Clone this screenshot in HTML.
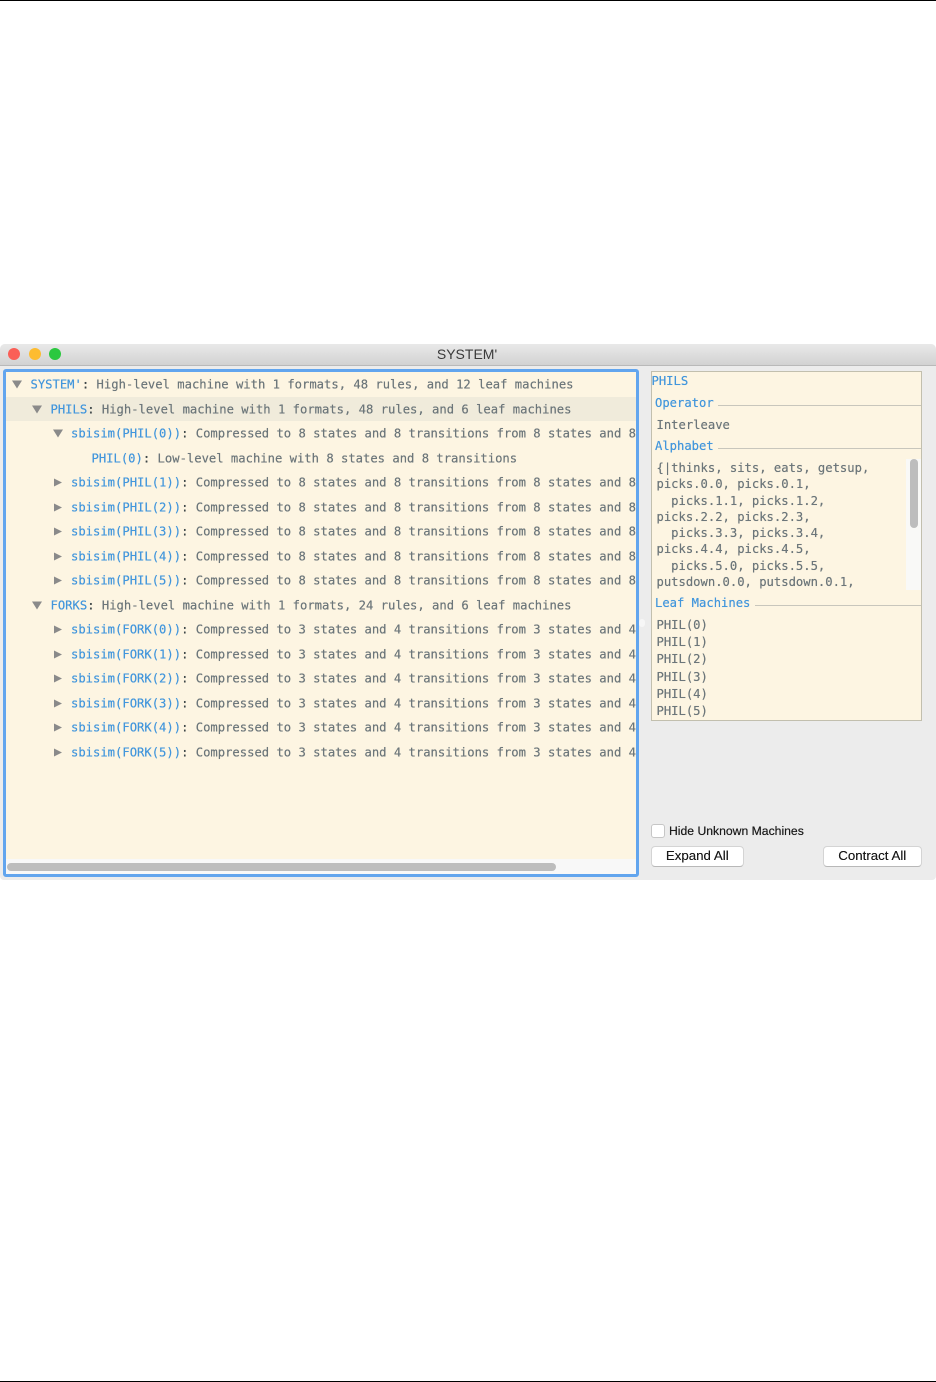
<!DOCTYPE html>
<html><head><meta charset="utf-8"><style>
html,body{margin:0;padding:0;background:#fff}
#p{position:relative;width:936px;height:1382px;overflow:hidden;background:#fff;font-family:"DejaVu Sans Mono","Liberation Mono",monospace;font-size:12.2px;color:#6c767a}
.a{position:absolute}
.r{position:absolute;line-height:20px;white-space:pre;height:20px;filter:blur(.3px);text-shadow:0 0 .4px currentColor;margin-left:-.5px}
b{font-weight:normal;color:#4296dc}
i{font-style:normal;color:#3d4648}
.t{position:absolute;width:0;height:0}
.d{border-left:5px solid transparent;border-right:5px solid transparent;border-top:8.5px solid #8a8a8a}
.g{border-top:4.5px solid transparent;border-bottom:4.5px solid transparent;border-left:8px solid #8a8a8a;margin-top:.5px;margin-left:-.5px}
.h{position:absolute;height:1px;background:#c8c6bc}
.s{font-family:"Liberation Sans",sans-serif;color:#1c1c1c;font-size:12.2px}
.btn{position:absolute;top:846px;height:21px;background:#fff;border:1px solid #d4d4d4;border-bottom:1.5px solid #b8b8b8;border-radius:4px;text-align:center;line-height:17px;font-family:"Liberation Sans",sans-serif;font-size:13.3px;color:#1a1a1a;box-sizing:border-box;text-shadow:0 0 .3px #1a1a1a}
</style></head><body><div id="p">
<div class="a" style="left:0;top:0;width:936px;height:1px;background:#000"></div>
<div class="a" style="left:0;top:1381px;width:936px;height:1px;background:#000"></div>

<div class="a" style="left:0;top:344px;width:936px;height:536px;background:#ececec;border-radius:5px 5px 4px 4px;overflow:hidden">
  <div class="a" style="left:0;top:0;width:936px;height:21px;background:linear-gradient(#e9e9e9,#d2d2d2);border-bottom:1px solid #b9b9b9"></div>
  <div class="a" style="left:8px;top:4px;width:12px;height:12px;border-radius:50%;background:#fa5f57"></div>
  <div class="a" style="left:29px;top:4px;width:12px;height:12px;border-radius:50%;background:#fdbc30"></div>
  <div class="a" style="left:49px;top:4px;width:12px;height:12px;border-radius:50%;background:#2bc83f"></div>
  <div class="a" style="left:0;top:0;width:934px;text-align:center;line-height:20px;font-family:'Liberation Sans',sans-serif;font-size:14px;color:#3a3a3a">SYSTEM'</div>
</div>

<!-- Left pane -->
<div class="a" style="left:3px;top:369px;width:636px;height:508px;box-sizing:border-box;border:3px solid #62a5ee;border-radius:3px;background:#fdf5e2"></div>
<div class="a" style="left:6px;top:396.5px;width:630px;height:24.5px;background:#f0ebdb"></div>
<div class="a" style="left:6px;top:859px;width:630px;height:15px;background:#f8f8f8"></div>
<div class="a" style="left:7px;top:863px;width:549px;height:8px;border-radius:4px;background:#bdbdbd"></div>
<div class="a" style="left:639px;top:619px;width:6px;height:8px;border-radius:3px;background:#f6f6f6"></div>

<div class="a" id="tree" style="left:0;top:0;width:636px;height:860px;overflow:hidden;transform:translateY(.5px)">
<div class="t d" style="left:12px;top:380px"></div>
<div class="r" style="left:31px;top:374px"><b>SYSTEM'</b><i>:</i> High-level machine with 1 formats, 48 rules, and 12 leaf machines</div>
<div class="t d" style="left:32px;top:405px"></div>
<div class="r" style="left:51px;top:398.5px"><b>PHILS</b><i>:</i> High-level machine with 1 formats, 48 rules, and 6 leaf machines</div>
<div class="t d" style="left:53px;top:429px"></div>
<div class="r" style="left:71.5px;top:423px"><b>sbisim(PHIL(0))</b><i>:</i> Compressed to 8 states and 8 transitions from 8 states and 8</div>
<div class="r" style="left:92px;top:447.5px"><b>PHIL(0)</b><i>:</i> Low-level machine with 8 states and 8 transitions</div>
<div class="t g" style="left:54px;top:477px"></div>
<div class="r" style="left:71.5px;top:472px"><b>sbisim(PHIL(1))</b><i>:</i> Compressed to 8 states and 8 transitions from 8 states and 8</div>
<div class="t g" style="left:54px;top:502px"></div>
<div class="r" style="left:71.5px;top:496.5px"><b>sbisim(PHIL(2))</b><i>:</i> Compressed to 8 states and 8 transitions from 8 states and 8</div>
<div class="t g" style="left:54px;top:526px"></div>
<div class="r" style="left:71.5px;top:521px"><b>sbisim(PHIL(3))</b><i>:</i> Compressed to 8 states and 8 transitions from 8 states and 8</div>
<div class="t g" style="left:54px;top:551px"></div>
<div class="r" style="left:71.5px;top:545.5px"><b>sbisim(PHIL(4))</b><i>:</i> Compressed to 8 states and 8 transitions from 8 states and 8</div>
<div class="t g" style="left:54px;top:575px"></div>
<div class="r" style="left:71.5px;top:570px"><b>sbisim(PHIL(5))</b><i>:</i> Compressed to 8 states and 8 transitions from 8 states and 8</div>
<div class="t d" style="left:32px;top:601px"></div>
<div class="r" style="left:51px;top:594.5px"><b>FORKS</b><i>:</i> High-level machine with 1 formats, 24 rules, and 6 leaf machines</div>
<div class="t g" style="left:54px;top:624px"></div>
<div class="r" style="left:71.5px;top:619px"><b>sbisim(FORK(0))</b><i>:</i> Compressed to 3 states and 4 transitions from 3 states and 4</div>
<div class="t g" style="left:54px;top:649px"></div>
<div class="r" style="left:71.5px;top:643.5px"><b>sbisim(FORK(1))</b><i>:</i> Compressed to 3 states and 4 transitions from 3 states and 4</div>
<div class="t g" style="left:54px;top:673px"></div>
<div class="r" style="left:71.5px;top:668px"><b>sbisim(FORK(2))</b><i>:</i> Compressed to 3 states and 4 transitions from 3 states and 4</div>
<div class="t g" style="left:54px;top:698px"></div>
<div class="r" style="left:71.5px;top:692.5px"><b>sbisim(FORK(3))</b><i>:</i> Compressed to 3 states and 4 transitions from 3 states and 4</div>
<div class="t g" style="left:54px;top:722px"></div>
<div class="r" style="left:71.5px;top:717px"><b>sbisim(FORK(4))</b><i>:</i> Compressed to 3 states and 4 transitions from 3 states and 4</div>
<div class="t g" style="left:54px;top:747px"></div>
<div class="r" style="left:71.5px;top:741.5px"><b>sbisim(FORK(5))</b><i>:</i> Compressed to 3 states and 4 transitions from 3 states and 4</div>
</div>

<!-- Right pane -->
<div class="a" style="left:650.5px;top:371px;width:271.5px;height:350px;box-sizing:border-box;border:1.3px solid #c2bfae;background:#fdf5e2"></div>
<div class="r" style="left:652px;top:370.5px"><b>PHILS</b></div>
<div class="r" style="left:655.5px;top:393px"><b>Operator</b></div>
<div class="h" style="left:718px;top:405px;width:203px"></div>
<div class="r" style="left:657px;top:414.5px">Interleave</div>
<div class="r" style="left:655.5px;top:436px"><b>Alphabet</b></div>
<div class="h" style="left:718px;top:448px;width:203px"></div>
<div class="a" style="left:906px;top:459px;width:15px;height:131px;background:#f9f9f7"></div>
<div class="a" style="left:910px;top:459px;width:8px;height:69px;border-radius:4px;background:#bdbdbd"></div>
<div class="r" style="left:657px;top:457.5px">{|thinks, sits, eats, getsup,</div>
<div class="r" style="left:657px;top:474px">picks.0.0, picks.0.1,</div>
<div class="r" style="left:657px;top:490.5px">  picks.1.1, picks.1.2,</div>
<div class="r" style="left:657px;top:507px">picks.2.2, picks.2.3,</div>
<div class="r" style="left:657px;top:523px">  picks.3.3, picks.3.4,</div>
<div class="r" style="left:657px;top:539px">picks.4.4, picks.4.5,</div>
<div class="r" style="left:657px;top:555.5px">  picks.5.0, picks.5.5,</div>
<div class="r" style="left:657px;top:572px">putsdown.0.0, putsdown.0.1,</div>
<div class="r" style="left:655.5px;top:593px"><b>Leaf Machines</b></div>
<div class="h" style="left:755px;top:605px;width:166px"></div>
<div class="r" style="left:657px;top:614.5px">PHIL(0)</div>
<div class="r" style="left:657px;top:632px">PHIL(1)</div>
<div class="r" style="left:657px;top:649px">PHIL(2)</div>
<div class="r" style="left:657px;top:666.5px">PHIL(3)</div>
<div class="r" style="left:657px;top:684px">PHIL(4)</div>
<div class="r" style="left:657px;top:701px">PHIL(5)</div>

<div class="a" style="left:650.5px;top:823.5px;width:14.5px;height:14.5px;box-sizing:border-box;background:#fff;border:1px solid #c6c6c6;border-radius:3px"></div>
<div class="r s" style="left:669.5px;top:820.5px">Hide Unknown Machines</div>
<div class="btn" style="left:650.5px;width:93.5px">Expand All</div>
<div class="btn" style="left:823px;width:98.5px">Contract All</div>
</div></body></html>
